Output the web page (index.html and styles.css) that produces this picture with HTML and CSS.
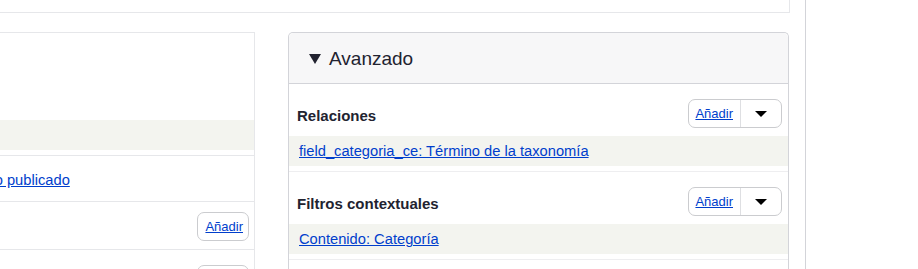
FILE: index.html
```html
<!DOCTYPE html>
<html lang="es">

<head>
    <meta charset="UTF-8">
    <meta name="viewport" content="width=device-width, initial-scale=1.0">
    <title>Vista - Avanzado</title>
    <link rel="stylesheet" href="styles.css">
</head>

<body>
    <div class="page">
        <div class="topBox"></div>
        <div class="columns">
            <!-- columna izquierda (recortada) -->
            <div class="colLeft">
                <div class="leftBox">
                    <div class="leftBlank"></div>
                    <div class="leftBand"></div>
                    <div class="leftRow linkRow">
                        <a href="#">Contenido: Estado publicado</a>
                    </div>
                    <div class="leftRow btnRow">
                        <a class="btnSingle" href="#">Añadir</a>
                    </div>
                    <div class="leftRow btnRow">
                        <a class="btnSingle" href="#">Añadir</a>
                    </div>
                </div>
            </div>
            <!-- columna derecha -->
            <div class="colRight">
                <div class="details">
                    <div class="summary"><span class="arrow"></span>Avanzado</div>
                    <div class="section">
                        <div class="sectionHead">
                            <h3>Relaciones</h3>
                            <div class="btnGroup">
                                <a href="#">Añadir</a>
                                <span class="drop"><i></i></span>
                            </div>
                        </div>
                        <div class="band"><a href="#">field_categoria_ce: Término de la taxonomía</a></div>
                    </div>
                    <div class="section">
                        <div class="sectionHead">
                            <h3>Filtros contextuales</h3>
                            <div class="btnGroup">
                                <a href="#">Añadir</a>
                                <span class="drop"><i></i></span>
                            </div>
                        </div>
                        <div class="band"><a href="#">Contenido: Categoría</a></div>
                    </div>
                    <div class="section"></div>
                </div>
            </div>
        </div>
    </div>
</body>

</html>
```

FILE: styles.css
```css
* {
    margin: 0;
    padding: 0;
    box-sizing: border-box;
}

html,
body {
    height: 100%;
    overflow: hidden;
    background: #fff;
}

body {
    font-family: "Liberation Sans", Arial, sans-serif;
    color: #222330;
}

a {
    color: #003ecc;
    text-decoration: underline;
}

/* la página sigue a la izquierda, fuera de la captura */
.page {
    margin-left: -115px;
    width: 921px;
    height: 100%;
    padding-right: 16px;
    border-right: 1px solid #d3d4d9;
}

.topBox {
    width: 905px;
    height: 13px;
    border-right: 1px solid #e6e7ea;
    border-bottom: 1px solid #e6e7ea;
}

.columns {
    display: flex;
    gap: 33px;
    margin-top: 19px;
}

.colLeft {
    width: 370px;
}

.colRight {
    width: 501px;
}

.leftBox {
    border-top: 1px solid #e6e7ea;
    border-right: 1px solid #e6e7ea;
}

.leftBlank {
    height: 87px;
}

.leftBand {
    height: 30px;
    margin-bottom: 5px;
    background: #f3f4ef;
}

.leftRow {
    border-top: 1px solid #e6e7ea;
    display: flex;
    align-items: center;
    padding: 0 5px 0 0;
}

.linkRow {
    height: 46px;
    font-size: 14.7px;
    padding-top: 3px;
}

.linkRow a {
    margin-left: -3px;
}

.btnRow {
    height: 48px;
    justify-content: flex-end;
    padding-top: 2px;
}

.btnRow:last-child {
    height: 40px;
    align-items: flex-start;
    padding-top: 15px;
}

.btnSingle {
    display: block;
    height: 29px;
    line-height: 27px;
    padding: 0 5px 0 7px;
    border: 1px solid #cbcccf;
    border-radius: 7px;
    font-size: 13px;
}

/* Avanzado */
.details {
    border: 1px solid #d3d4d9;
    border-bottom: none;
    border-radius: 5px 5px 0 0;
}

.summary {
    display: flex;
    align-items: center;
    height: 51px;
    padding-left: 20px;
    padding-top: 2px;
    background: #f7f7f8;
    border-bottom: 1px solid #d3d4d9;
    border-radius: 5px 5px 0 0;
    font-size: 19px;
}

.arrow {
    width: 0;
    height: 0;
    margin-right: 8px;
    border-left: 6px solid transparent;
    border-right: 6px solid transparent;
    border-top: 10px solid #222330;
}

.section {
    padding-top: 15px;
    padding-bottom: 5px;
    border-bottom: 1px solid #eeeef0;
}

.sectionHead {
    display: flex;
    align-items: center;
    justify-content: space-between;
    height: 29px;
    margin-bottom: 8px;
    padding: 0 6px 0 8px;
}

.sectionHead h3 {
    font-size: 15px;
    font-weight: bold;
    padding-top: 3px;
}

.btnGroup {
    display: flex;
    height: 29px;
    border: 1px solid #cbcccf;
    border-radius: 7px;
    background: #fff;
}

.btnGroup a {
    display: block;
    line-height: 27px;
    padding: 0 7px 0 6px;
    font-size: 13px;
    border-right: 1px solid #dedfe2;
}

.drop {
    display: flex;
    align-items: center;
    justify-content: center;
    width: 40px;
}

.drop i {
    width: 0;
    height: 0;
    border-left: 6px solid transparent;
    border-right: 6px solid transparent;
    border-top: 6px solid #000;
}

.band {
    display: flex;
    align-items: center;
    height: 30px;
    padding-left: 10px;
    background: #f3f4ef;
    font-size: 14.7px;
}
```
